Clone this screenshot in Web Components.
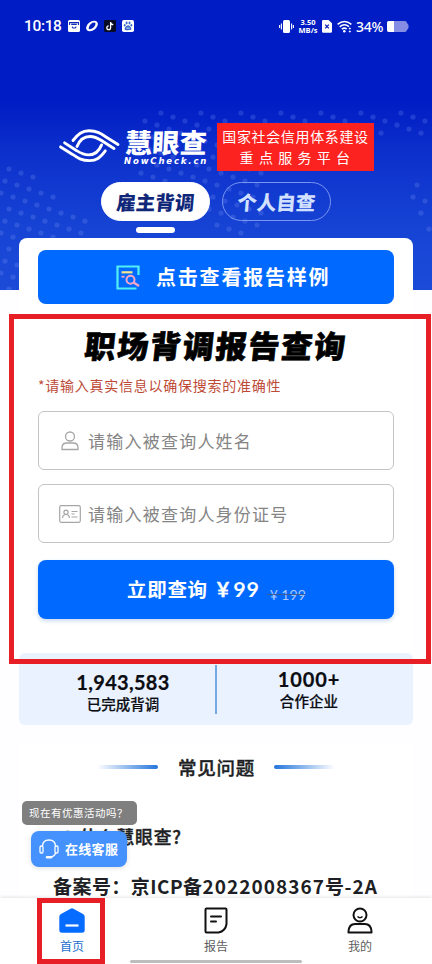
<!DOCTYPE html>
<html lang="zh-CN">
<head>
<meta charset="utf-8">
<title>慧眼查</title>
<style>
html,body{margin:0;padding:0}
body{width:432px;height:964px;overflow:hidden;background:#fefdff;font-family:"Noto Sans","Noto Sans CJK SC",sans-serif}
</style>
</head>
<body>
<check-app></check-app>
<script>
function define(name, css, html){
  customElements.define(name, class extends HTMLElement{
    constructor(){
      super();
      this.attachShadow({mode:'open'}).innerHTML =
        '<style>*{box-sizing:border-box}:host{display:block;box-sizing:border-box;white-space:nowrap}'+css+'</style>'+html;
    }
  });
}

define('status-bar', `
:host{display:flex;align-items:center;height:52px;padding:0 23px 0 24px;color:#fff}
.time{font:500 15.5px/20px Roboto,sans-serif;width:37px;letter-spacing:-.35px}
.apps{display:flex;gap:6px;margin-left:7px}
svg{display:block;flex:none}
.right{margin-left:auto;display:flex;align-items:center}
.net{font:700 7.500px/8px "Open Sans",sans-serif;text-align:center;margin:0 4px 0 4px;width:20px}
.pct{font:500 14px/20px "Noto Sans",sans-serif;margin:1px 4px 0 4px;width:27px;letter-spacing:-.3px}
`, `
<span class="time">10:18</span>
<div class="apps">
<svg width="12" height="12" viewBox="0 0 12 12"><rect width="12" height="12" rx="1.6" fill="#fff"/><path d="M1.5 5V2.6h9V5M3.2 4.4h5.6M4 6.6l1 1.4h2.2l1-1.4" fill="none" stroke="#152bb8" stroke-width="1.1"/></svg>
<svg width="12" height="12" viewBox="0 0 12 12"><g transform="rotate(-38 6 6)"><ellipse cx="6" cy="6" rx="6.6" ry="4.3" fill="#fff"/><path d="M1.6 6.2Q4.2 3.2 8.4 3.9Q11 4.7 10.5 5.8Q9 8.5 4.5 8Q1.8 7.5 1.6 6.2Z" fill="#0822c0"/></g></svg>
<svg width="12" height="12" viewBox="0 0 12 12"><rect width="12" height="12" rx="1.4" fill="#080b25"/><path d="M6.6 2v5.8a1.9 1.9 0 1 1-1.9-1.9M6.6 2.3c.2 1.5 1.2 2.3 2.7 2.4" fill="none" stroke="#fff" stroke-width="1.3"/></svg>
<svg width="12" height="12" viewBox="0 0 12 12"><rect width="12" height="12" rx="1.8" fill="#fff"/><g fill="#3a68c9"><ellipse cx="4.6" cy="3" rx="1" ry="1.4"/><ellipse cx="7.5" cy="3" rx="1" ry="1.4"/><ellipse cx="2.7" cy="5.2" rx=".9" ry="1.2"/><ellipse cx="9.4" cy="5.2" rx=".9" ry="1.2"/><path d="M6 5.2C4.6 5.2 2.6 7.5 2.6 8.8S4 10.4 6 10.2s3.4 0 3.4-1.4S7.4 5.2 6 5.2Z"/></g><path d="M4.4 8.1h3.2" stroke="#fff" stroke-width=".8"/></svg>
</div>
<div class="right">
<svg width="15" height="13" viewBox="0 0 15 13"><rect x="4" width="7" height="13" rx="1.6" fill="#fff"/><path d="M2.4 3.5v6M.6 5v3M12.6 3.5v6M14.4 5v3" stroke="#fff" stroke-width="1.1"/></svg>
<div class="net">3.50<br>MB/s</div>
<svg width="10" height="13" viewBox="0 0 10 13"><path d="M1.5 0H6.5L10 3.3V11.5a1.3 1.3 0 0 1-1.3 1.3H1.3A1.3 1.3 0 0 1 0 11.500V1.300A1.300 1.300 0 0 1 1.500 0Z" fill="#fff"/><path d="M3.200 4.600l3.600 3.800M6.800 4.600l-3.600 3.800" stroke="#0b20b8" stroke-width="1.300"/></svg>
<svg style="margin-left:5px" width="15" height="13" viewBox="0 0 15 13"><path d="M.6 4.300Q7.300-1.300 14.400 4.300M2.700 6.800Q7.300 3 12 6.600M4.800 9.100Q7.300 7.200 9.800 9" fill="none" stroke="#fff" stroke-width="1.500"/><circle cx="7.300" cy="11.300" r="1.300" fill="#fff"/><path d="M11.800 8.500h2M11.800 11.500h2M12.800 7.500v2M12.800 10.500v2" stroke="#fff" stroke-width=".9"/></svg>
<span class="pct">34%</span>
<svg width="22" height="11" viewBox="0 0 22 11"><path d="M2 0h16q1.500 0 2 2l1.500 2v3L20 9q-.5 2-2 2H2q-2 0-2-2V2Q0 0 2 0Z" fill="#858ce4"/><path d="M2 0h5v11H2Q0 11 0 9V2Q0 0 2 0Z" fill="#fff"/></svg>
</div>`);

define('brand-header', `
:host{display:flex;height:49px;margin-top:70px;padding-left:58px}
svg{display:block;margin-top:7px;flex:none}
.name{width:85px;flex:none;margin:4px 0 0 5px;color:#fff;font-family:"Noto Sans CJK SC",sans-serif}
b{display:block;font-weight:900;font-size:27px;line-height:31px;letter-spacing:.4px;transform:skewX(-3deg)}
i{display:block;font:italic 700 8.500px/9px "DejaVu Sans",sans-serif;letter-spacing:1.850px;margin:0 0 0 -1px}
.badge{width:157px;flex:none;height:48px;margin:1px 0 0 7px;background:#fc221f;color:#fff;text-align:center;font-family:"Noto Sans CJK SC",sans-serif;font-size:14px;line-height:21px;padding-top:3px;letter-spacing:.65px}
.badge span{display:block;letter-spacing:5.300px;padding-left:4px}
`, `
<svg width="62" height="34" viewBox="0 0 62 34" fill="none" stroke="#fff" stroke-width="2.900" stroke-linecap="round" stroke-linejoin="round"><path d="M15 11.500C20 5 24 1.800 31 1.800C39 1.800 43 4.500 48 8L60 15.500"/><path d="M19 17.500C22 10 26 7.500 32 7.500C38 7.500 41 10 45 12.500L56 19.500"/><path d="M47.300 21.900C42.600 28.400 38.600 31.600 31.600 31.600C23.600 31.600 19.600 28.900 14.600 25.400L2.600 17.900"/><path d="M43.600 15.900C40.600 23.400 36.600 25.900 30.600 25.900C24.600 25.900 21.600 23.400 17.600 20.900L6.600 13.900"/></svg>
<div class="name"><b>慧眼查</b><i>NowCheck.cn</i></div>
<div class="badge">国家社会信用体系建设<span>重点服务平台</span></div>`);

define('mode-tab', `
:host{width:109px;height:39px;border-radius:20px;border:1px solid #7895ef;color:#d2e1ff;text-align:center;font:900 19.500px/37px "Noto Sans CJK SC",sans-serif}
:host([active]){background:#fff;border-color:#fff;color:#102779}
span{display:block;transform:skewX(-5deg)}
`, `<span><slot></slot></span>`);

define('mode-tabs', `
:host{padding:11px 0 0 101px;height:67px}
.row{display:flex;gap:12px}
.bar{width:39px;height:6px;border-radius:3px;background:#fff;margin:6px 0 0 35px}
`, `<div class="row"><mode-tab active>雇主背调</mode-tab><mode-tab>个人自查</mode-tab></div><div class="bar"></div>`);

define('page-hero', `
:host{height:290px;background:linear-gradient(#001cc4 0,#001cc4 100px,#0c2fcb 150px,#1643d4 225px,#1c4bd8 290px);position:relative}
.dots{position:absolute;inset:0}
.in{position:relative}
`, `<svg class="dots" width="432" height="290"></svg><div class="in"><status-bar></status-bar><brand-header></brand-header><mode-tabs></mode-tabs></div>`);

define('sample-button', `
:host{display:flex;align-items:center;height:54px;border-radius:8px;background:#0069ff;color:#fff;padding-left:78px;font:700 20px/54px "Noto Sans CJK SC",sans-serif;letter-spacing:1.800px}
svg{margin-right:16px}
`, `<svg width="24" height="25" viewBox="0 0 24 25" fill="none"><path d="M22.500 10V1.500H1.500v22h19" stroke="#50f0f4" stroke-width="2.200"/><path d="M5.500 7.300h11" stroke="#f7e68d" stroke-width="2.200"/><path d="M5.500 11.700h3" stroke="#f3a6c8" stroke-width="1.800"/><circle cx="14.500" cy="14.800" r="4" stroke="#f3a6c8" stroke-width="2"/><path d="M17.500 17.500l5.500 3.500" stroke="#f3a6c8" stroke-width="2.400"/></svg><slot></slot>`);

define('form-field', `
:host{display:flex;align-items:center;height:59px;border:1px solid #c4c4c4;border-radius:6px;background:#fff;color:#858585;padding-left:20px;font:400 17px/57px "Noto Sans CJK SC",sans-serif;letter-spacing:1.230px}
.ic{width:22px;margin-right:7px;display:flex;justify-content:center}
`, `<div class="ic"><slot name="icon"></slot></div><span><slot></slot></span>`);

define('pay-button', `
:host{display:flex;height:59px;border-radius:8px;background:#0069ff;color:#fff;padding-left:89px;font:700 19.500px/58px "Noto Sans CJK SC",sans-serif;letter-spacing:.700px;box-shadow:0 2px 4px #7ba0d866}
.p{font:700 21.500px/58px Lato,"Noto Sans CJK SC",sans-serif;margin-left:9px;width:43px;letter-spacing:.900px}
.p i{font-style:normal;font-size:21.500px;margin-right:3px;-webkit-text-stroke:.3px #fff}
.old{position:relative;margin-left:9px;width:38px;color:#a9c8ff;font:400 14px/65px Lato,sans-serif;letter-spacing:.200px;padding-left:1px;padding-top:2px}
.old span{margin-left:3px}
.old:after{content:"";position:absolute;left:-2px;width:38px;top:34px;height:1px;background:#3d5b95}
`, `<span>立即查询</span><span class="p"><i>¥</i>99</span><span class="old">¥<span>199</span></span>`);

define('query-card', `
:host{position:relative;margin:-52px 19px 0;height:415px;background:#fff;border-radius:8px 8px 0 0;padding:12px 19px 0 19px}
h1{margin:22px 0 0;height:38px;text-align:center;font:900 31px/38px "Noto Sans CJK SC",sans-serif;letter-spacing:1.800px;color:#000;transform:skewX(-6deg);-webkit-text-stroke:.700px #000}
.hint{margin:11px 0 16px;height:20px;font:400 14px/20px "Noto Sans CJK SC",sans-serif;letter-spacing:.750px;color:#bd4a37}
form-field+form-field{margin-top:14px}
pay-button{margin-top:17px}
`, `<sample-button>点击查看报告样例</sample-button>
<h1>职场背调报告查询</h1>
<div class="hint">*请输入真实信息以确保搜索的准确性</div>
<form-field><svg slot="icon" width="18" height="20" viewBox="0 0 18 20" fill="none" stroke="#a6a6a6" stroke-width="1.300"><circle cx="9" cy="5.500" r="4.500"/><path d="M1 18.500v-2q0-4.500 5-4.500h6q5 0 5 4.500v2Z"/></svg>请输入被查询人姓名</form-field>
<form-field><svg slot="icon" width="22" height="18" viewBox="0 0 22 18" fill="none" stroke="#a6a6a6" stroke-width="1.200"><rect x=".7" y=".7" width="20.600" height="16.600" rx="1.500"/><circle cx="7" cy="7.300" r="2.100"/><path d="M3.500 13q.3-3.500 3.500-3.500t3.500 3.500M12.500 6.500h6M12.500 9h3M12.500 12h6"/></svg>请输入被查询人身份证号</form-field>
<pay-button></pay-button>`);

define('stat-item', `
:host{text-align:center;color:#0b0d12;font:500 14.500px/20px "Noto Sans CJK SC",sans-serif;-webkit-text-stroke:.2px #0b0d12}
b{display:block;font:700 20px/24px Lato,sans-serif}
`, `<b><slot name="value"></slot></b><slot></slot>`);

define('stats-panel', `
:host{display:grid;grid-template-columns:196px 2px 196px;margin:0 19px;height:72px;background:#eaf2ff;border-radius:6px}
.bar{background:#76a9e2;margin:12px 0 11px}
stat-item{padding:17px 0 0 12px}
.v{letter-spacing:.3px}
stat-item:last-child{padding:14px 12px 0 0;letter-spacing:.100px}
.k{letter-spacing:.9px}
`, `<stat-item><span slot="value" class="v">1,943,583</span>已完成背调</stat-item><div class="bar"></div><stat-item><span slot="value" class="k">1000+</span>合作企业</stat-item>`);

define('faq-section', `
:host{margin:18px 19px 0;height:221px;background:#fff;color:#1d1f24}
.wrap{padding-top:10px}
.h{display:flex;align-items:center;justify-content:center;gap:20px;height:28px}
.h i{width:61px;height:4px;border-radius:2px;background:linear-gradient(90deg,#fff0,#2475dc)}
.h i:last-child{background:linear-gradient(270deg,#fff0,#2475dc)}
.h b{font:500 18.500px/28px "Noto Sans CJK SC",sans-serif;letter-spacing:.800px;margin-right:-1px;-webkit-text-stroke:.4px #1d1f24}
.q{margin:42px 0 0 43px;font:500 17.800px/26px "Noto Sans CJK SC",sans-serif;letter-spacing:.850px;-webkit-text-stroke:.4px #1d1f24}
.icp{margin:24px 0 0 34px;font:700 19px/26px "Noto Sans CJK SC",sans-serif;letter-spacing:.450px}
.icp span{letter-spacing:1.050px}
`, `<div class="wrap"><div class="h"><i></i><b>常见问题</b><i></i></div>
<div class="q">1.什么慧眼查?</div><div class="icp">备案号：京ICP备<span>2022008367</span>号<span>-2A</span></div></div>`);

define('support-chat', `
:host{position:absolute;left:22px;top:801px;color:#fff;font-family:"Noto Sans CJK SC",sans-serif}
.tip{width:115px;height:24px;border-radius:5px;background:#7f7f7f;font-size:10.500px;line-height:24px;padding-left:7px;letter-spacing:.500px}
.btn{display:flex;align-items:center;width:96px;height:36px;margin:6px 0 0 9px;border-radius:8px;background:#4592ff;padding-left:8px;gap:6px;font:700 13px/36px "Noto Sans CJK SC",sans-serif;letter-spacing:.300px;box-shadow:0 1px 5px #0002}
`, `<div class="tip">现在有优惠活动吗？</div><div class="btn"><svg width="20" height="20" viewBox="0 0 20 20" fill="none" stroke="#fff" stroke-width="1.300"><path d="M3.500 7Q3.800 1 10 1t6.500 6M16.500 14q-1 3.500-5 4.200"/><rect x="1" y="7" width="3" height="7" rx="1.300"/><rect x="16" y="7" width="3" height="7" rx="1.300"/><path d="M8 18.200h4" stroke-width="2.400" stroke-linecap="round"/></svg><span>在线客服</span></div>`);

define('nav-item', `
:host{display:flex;flex-direction:column;align-items:center;width:144px;color:#5d5d5d;font:400 12px/18px "Noto Sans CJK SC",sans-serif;padding-top:9px}
:host([active]){color:#1c6fcf}
span{margin-top:3px}
`, `<slot name="icon"></slot><span><slot></slot></span>`);

define('nav-bar', `
:host{position:absolute;left:0;top:898px;width:432px;height:66px;background:#fff;display:flex;box-shadow:0 -1px 3px #0000001c}
.home{position:absolute;left:130px;top:62px;width:172px;height:3px;border-radius:2px;background:#bdbdbd}
svg{display:block}
`, `<nav-item active><svg slot="icon" width="26" height="27" viewBox="0 0 26 27"><path d="M11.500 1.700Q13 .7 14.500 1.700L24 7q1.700 1 1.700 2.500V23q0 2.700-2.700 2.700H3Q.3 25.700.3 23V9.500Q.3 8 2 7Z" fill="#066cff"/><path d="M6.500 18.500h13" stroke="#fff" stroke-width="2.200"/></svg>首页</nav-item>
<nav-item><svg slot="icon" width="24" height="27" viewBox="0 0 24 27" fill="none" stroke="#111" stroke-width="2" stroke-linecap="round" stroke-linejoin="round"><path d="M2.500 1.500h19q1 0 1 1V17q-1 7-8 8.500h-12q-1 0-1-1v-22q0-1 1-1Z"/><path d="M7 9.500h10M7 14.500h5"/></svg>报告</nav-item>
<nav-item><svg slot="icon" width="26" height="27" viewBox="0 0 26 27" fill="none" stroke="#111" stroke-width="2" stroke-linejoin="round"><circle cx="13" cy="8" r="6.500"/><path d="M10.500 9.500q2.500 2.500 5 0" stroke-width="1.500"/><path d="M1.500 25.500v-1Q2 17 8 17h10q6 0 6.500 7.500v1Z"/></svg>我的</nav-item><div class="home"></div>`);

define('highlight-frame', `:host{position:absolute;border:5px solid #e71e26}`, ``);

define('check-app', `
:host{position:relative;width:432px;height:964px;overflow:hidden}
.main{left:9px;top:314px;width:422px;height:350px}
.tab{left:37px;top:898px;width:68px;height:66px}
`, `<page-hero></page-hero><query-card></query-card><stats-panel></stats-panel><faq-section></faq-section><support-chat></support-chat><nav-bar></nav-bar><highlight-frame class="main"></highlight-frame><highlight-frame class="tab"></highlight-frame>`);

// Dotted texture behind the brand area: a tilted lattice, kept inside three patches.
(function(){
  const hero = document.querySelector('check-app').shadowRoot.querySelector('page-hero');
  const svg = hero.shadowRoot.querySelector('.dots');
  const patches = [
    [[0,165],[30,170],[60,200],[90,218],[88,240],[60,290],[0,290]],
    [[140,110],[432,110],[432,150],[385,133],[300,150],[262,165],[262,237],[225,237],[200,200],[140,178]],
    [[408,180],[420,185],[432,205],[432,235],[408,205]]
  ];
  const inside = (x, y, poly) => {
    let r = false;
    for (let i = 0, j = poly.length - 1; i < poly.length; j = i++){
      const [ax, ay] = poly[i], [bx, by] = poly[j];
      if ((ay > y) !== (by > y) && x < (bx - ax) * (y - ay) / (by - ay) + ax) r = !r;
    }
    return r;
  };
  let s = '';
  for (let a = -30; a < 40; a++) for (let b = -15; b < 25; b++){
    const x = 161 + 12 * a - 4 * b, y = 113 + 4 * a + 12 * b;
    if (patches.some(p => inside(x, y, p)))
      s += '<circle cx="'+x+'" cy="'+y+'" r="2.6" fill="#8fa8ff" fill-opacity=".2"/>';
  }
  svg.innerHTML = s;
})();
</script>
</body>
</html>
